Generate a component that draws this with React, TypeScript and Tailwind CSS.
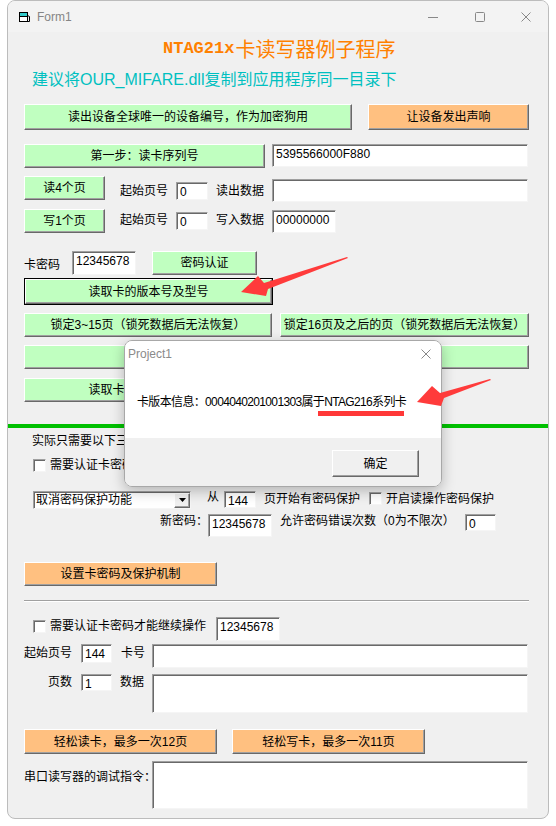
import React from 'react';

const raised =
    'border border-t-white border-l-white border-r-[#696969] border-b-[#696969] shadow-[inset_-1px_-1px_0_#a0a0a0]';
const sunken =
    'border border-t-[#a0a0a0] border-l-[#a0a0a0] border-r-[#f5f5f5] border-b-[#f5f5f5] shadow-[inset_1px_1px_0_#696969] bg-white';

interface BoxProps {
    className?: string;
    children?: React.ReactNode;
}

const GreenBtn: React.FC<BoxProps> = ({ className = '', children }) => (
    <div className={`${raised} bg-[#c0ffc0] flex items-center justify-center text-[12px] leading-none shrink-0 ${className}`}>
        {children}
    </div>
);

const OrangeBtn: React.FC<BoxProps> = ({ className = '', children }) => (
    <div className={`${raised} bg-[#ffc080] flex items-center justify-center text-[12px] leading-none shrink-0 ${className}`}>
        {children}
    </div>
);

const TextBox: React.FC<BoxProps> = ({ className = '', children }) => (
    <div className={`${sunken} text-[12px] leading-[14px] pl-[3px] pt-[2px] shrink-0 ${className}`}>{children}</div>
);

const Label: React.FC<BoxProps> = ({ className = '', children }) => (
    <div className={`text-[12px] leading-[16px] whitespace-nowrap shrink-0 ${className}`}>{children}</div>
);

const CheckBox: React.FC<BoxProps> = ({ className = '' }) => (
    <div className={`w-[13px] h-[13px] ${sunken} shrink-0 ${className}`} />
);

export default function App() {
    return (
        <div className="relative w-[556px] h-[826px] bg-white text-black font-['Liberation_Sans','Noto_Sans_CJK_SC',sans-serif] overflow-hidden">
            {/* main window */}
            <div className="ml-[7px] w-[542px] h-[819px] border border-[#bcbcbc] rounded-[8px] bg-[#f0f0f0] overflow-hidden flex flex-col">
                <div className="h-[31px] bg-[#f3f3f3] flex items-center shrink-0">
                    <svg width="12" height="12" viewBox="0 0 12 12" className="ml-[10px]">
                        <rect x="1.5" y="1.5" width="8" height="9" fill="#fff" stroke="#000" />
                        <rect x="2" y="2" width="7" height="3" fill="#33cccc" />
                        <path d="M1.5 5.5h8M9.5 4.5l2 1v5h-2" fill="none" stroke="#000" />
                    </svg>
                    <span className="ml-[7px] text-[12px] text-[#858585]">Form1</span>
                    <div className="flex-1" />
                    <svg width="10" height="10" viewBox="0 0 10 10" className="mr-[37px]">
                        <path d="M0 5.5h10" stroke="#888" />
                    </svg>
                    <svg width="10" height="10" viewBox="0 0 10 10" className="mr-[36px]">
                        <rect x="0.5" y="0.5" width="9" height="9" rx="1" fill="none" stroke="#888" />
                    </svg>
                    <svg width="10" height="10" viewBox="0 0 10 10" className="mr-[17px]">
                        <path d="M0.5 0.5l9 9M9.5 0.5l-9 9" stroke="#888" />
                    </svg>
                </div>

                <div className="flex flex-col">
                    <div className="mt-[6px] pl-[155px] h-[22px] flex items-center text-[#ff8000] whitespace-nowrap">
                        <span className="font-['Liberation_Mono',monospace] text-[17px] font-bold">NTAG21x</span>
                        <span className="font-['Noto_Sans_CJK_SC',sans-serif] text-[20px] ml-[1px]">卡读写器例子程序</span>
                    </div>
                    <div className="mt-[10px] pl-[24px] h-[20px] leading-[20px] text-[16px] text-[#00c0c0] whitespace-nowrap">
                        建议将OUR_MIFARE.dll复制到应用程序同一目录下
                    </div>

                    <div className="mt-[14px] flex items-start">
                        <GreenBtn className="ml-[16px] w-[328px] h-[26px]">读出设备全球唯一的设备编号，作为加密狗用</GreenBtn>
                        <OrangeBtn className="ml-[16px] w-[161px] h-[26px]">让设备发出声响</OrangeBtn>
                    </div>

                    <div className="mt-[14px] flex items-start">
                        <GreenBtn className="ml-[16px] w-[241px] h-[24px]">第一步：读卡序列号</GreenBtn>
                        <TextBox className="ml-[7px] w-[256px] h-[23px]">5395566000F880</TextBox>
                    </div>

                    <div className="mt-[8px] flex items-start">
                        <GreenBtn className="ml-[16px] w-[81px] h-[24px]">读4个页</GreenBtn>
                        <Label className="ml-[15px] mt-[7px] w-[48px]">起始页号</Label>
                        <TextBox className="ml-[8px] mt-[6px] w-[32px] h-[18px]">0</TextBox>
                        <Label className="ml-[8px] mt-[7px] w-[48px]">读出数据</Label>
                        <TextBox className="ml-[8px] mt-[3px] w-[256px] h-[23px]" />
                    </div>

                    <div className="mt-[7px] flex items-start">
                        <GreenBtn className="ml-[16px] w-[81px] h-[24px]">写1个页</GreenBtn>
                        <Label className="ml-[15px] mt-[3px] w-[48px]">起始页号</Label>
                        <TextBox className="ml-[8px] mt-[3px] w-[32px] h-[18px]">0</TextBox>
                        <Label className="ml-[8px] mt-[3px] w-[48px]">写入数据</Label>
                        <TextBox className="ml-[8px] mt-[1px] w-[64px] h-[23px]">00000000</TextBox>
                    </div>

                    <div className="mt-[18px] flex items-start">
                        <Label className="ml-[16px] mt-[6px] w-[36px]">卡密码</Label>
                        <TextBox className="ml-[12px] w-[64px] h-[24px]">12345678</TextBox>
                        <GreenBtn className="ml-[16px] w-[105px] h-[24px]">密码认证</GreenBtn>
                    </div>

                    <div className="mt-[3px] flex items-start">
                        <div className="ml-[16px] w-[249px] h-[27px] border border-black">
                            <GreenBtn className="w-full h-full">读取卡的版本号及型号</GreenBtn>
                        </div>
                    </div>

                    <div className="mt-[8px] flex items-start">
                        <GreenBtn className="ml-[16px] w-[248px] h-[24px]">锁定3~15页（锁死数据后无法恢复）</GreenBtn>
                        <GreenBtn className="ml-[8px] w-[249px] h-[24px]">锁定16页及之后的页（锁死数据后无法恢复）</GreenBtn>
                    </div>

                    <div className="mt-[8px] flex items-start">
                        <GreenBtn className="ml-[16px] w-[505px] h-[24px]">读取卡的配置信息</GreenBtn>
                    </div>

                    <div className="mt-[9px] flex items-start">
                        <GreenBtn className="ml-[16px] w-[249px] h-[24px]">读取卡的配置页的数据</GreenBtn>
                    </div>

                    <div className="mt-[22px] h-[4px] bg-[#00c000]" />

                    <Label className="mt-[5px] ml-[24px]">实际只需要以下三个步骤即可设置卡密码</Label>

                    <div className="mt-[8px] h-[16px] flex items-center">
                        <CheckBox className="ml-[25px]" />
                        <Label className="ml-[4px]">需要认证卡密码才能继续操作</Label>
                    </div>

                    <div className="mt-[16px] h-[19px] flex items-start">
                        <div className={`ml-[25px] mt-[2px] w-[158px] h-[18px] ${sunken} flex items-center`}>
                            <span className="flex-1 pl-[2px] text-[12px] leading-none">取消密码保护功能</span>
                            <div className={`${raised} bg-[#f0f0f0] w-[16px] h-[15px] flex items-center justify-center`}>
                                <svg width="7" height="4" viewBox="0 0 7 4">
                                    <path d="M0 0h7L3.5 4z" fill="#000" />
                                </svg>
                            </div>
                        </div>
                        <Label className="ml-[16px] w-[12px]">从</Label>
                        <TextBox className="ml-[5px] mt-[2px] w-[32px] h-[17px]">144</TextBox>
                        <Label className="ml-[8px] mt-[2px] w-[96px]">页开始有密码保护</Label>
                        <CheckBox className="ml-[9px] mt-[3px]" />
                        <Label className="ml-[4px] mt-[2px]">开启读操作密码保护</Label>
                    </div>

                    <div className="mt-[5px] flex items-start">
                        <Label className="ml-[152px] w-[48px]">新密码：</Label>
                        <TextBox className="mt-[1px] w-[64px] h-[23px]">12345678</TextBox>
                        <Label className="ml-[8px] w-[177px]">允许密码错误次数（0为不限次）</Label>
                        <TextBox className="ml-[8px] mt-[1px] w-[31px] h-[17px]">0</TextBox>
                    </div>

                    <div className="mt-[25px] flex items-start">
                        <OrangeBtn className="ml-[16px] w-[193px] h-[24px]">设置卡密码及保护机制</OrangeBtn>
                    </div>

                    <div className="mt-[14px] ml-[16px] w-[505px] h-[2px] border-t border-t-[#a0a0a0] border-b border-b-white" />

                    <div className="mt-[15px] flex items-start">
                        <CheckBox className="ml-[25px] mt-[3px]" />
                        <Label className="ml-[4px] mt-[1px] w-[156px]">需要认证卡密码才能继续操作</Label>
                        <TextBox className="ml-[10px] w-[64px] h-[24px]">12345678</TextBox>
                    </div>

                    <div className="mt-[3px] flex items-start">
                        <Label className="ml-[16px] mt-[1px] w-[48px]">起始页号</Label>
                        <TextBox className="ml-[9px] w-[31px] h-[19px]">144</TextBox>
                        <Label className="ml-[9px] mt-[1px] w-[24px]">卡号</Label>
                        <TextBox className="ml-[7px] w-[376px] h-[24px]" />
                    </div>

                    <div className="mt-[6px] flex items-start">
                        <Label className="ml-[40px] w-[24px]">页数</Label>
                        <TextBox className="ml-[9px] w-[31px] h-[17px]">1</TextBox>
                        <Label className="ml-[8px] w-[24px]">数据</Label>
                        <TextBox className="ml-[8px] w-[376px] h-[39px]" />
                    </div>

                    <div className="mt-[16px] flex items-start">
                        <OrangeBtn className="ml-[16px] w-[193px] h-[25px]">轻松读卡，最多一次12页</OrangeBtn>
                        <OrangeBtn className="ml-[15px] w-[193px] h-[25px]">轻松写卡，最多一次11页</OrangeBtn>
                    </div>

                    <div className="mt-[7px] flex items-start">
                        <Label className="ml-[16px] mt-[8px] w-[128px] text-[11.5px]">串口读写器的调试指令：</Label>
                        <TextBox className="w-[376px] h-[48px]" />
                    </div>
                </div>
            </div>

            {/* message box */}
            <div className="absolute left-[124px] top-[340px] w-[318px] h-[147px] border border-[#a8a8a8] rounded-[8px] overflow-hidden shadow-[0_4px_14px_rgba(0,0,0,0.25)] flex flex-col">
                <div className="h-[25px] bg-white flex items-center">
                    <span className="ml-[3px] text-[12px] text-[#8a8a8a]">Project1</span>
                    <div className="flex-1" />
                    <svg width="10" height="10" viewBox="0 0 10 10" className="mr-[10px]">
                        <path d="M0.5 0.5l9 9M9.5 0.5l-9 9" stroke="#888" />
                    </svg>
                </div>
                <div className="relative h-[72px] bg-white flex items-center">
                    <span className="ml-[12px] text-[12px] tracking-[-0.65px] whitespace-nowrap">
                        卡版本信息：0004040201001303属于NTAG216系列卡
                    </span>
                    <div className="absolute left-[193px] top-[45px] w-[86px] h-[5px] bg-[#ff3838]" />
                </div>
                <div className="flex-1 bg-[#f0f0f0] flex items-start">
                    <div className={`${raised} bg-[#f0f0f0] ml-[207px] mt-[12px] w-[87px] h-[27px] flex items-center justify-center text-[12px]`}>
                        确定
                    </div>
                </div>
            </div>

            {/* annotation arrows */}
            <svg className="absolute left-0 top-0 pointer-events-none" width="556" height="826" viewBox="0 0 556 826">
                <polygon points="347,257 264,283 258,276 241,292 266,296 268,289 348,258" fill="#ff3b3b" />
                <polygon points="490,379 440,393 432,386 417,402 441,406 444,398 491,380" fill="#ff3b3b" />
            </svg>
        </div>
    );
}
